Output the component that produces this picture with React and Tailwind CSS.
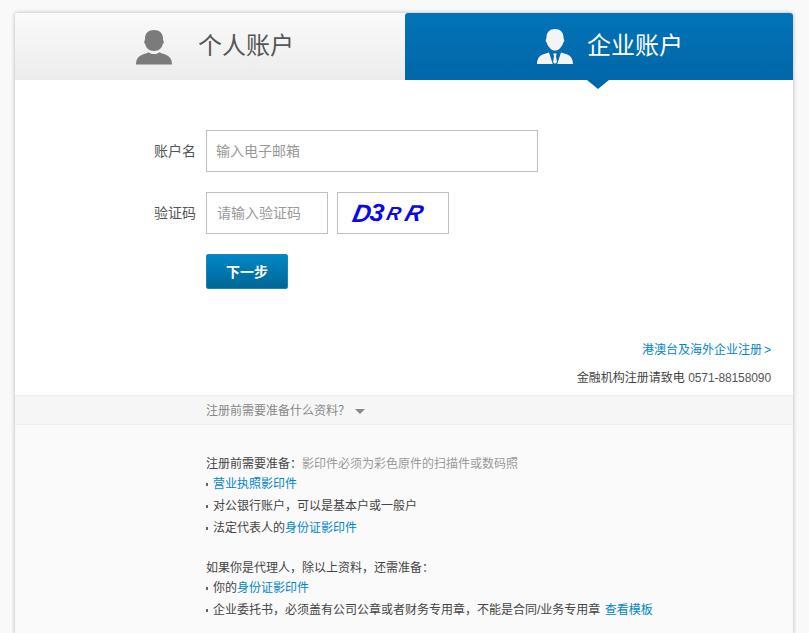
import React from 'react'

const cjk = 'font-["Liberation_Sans","Noto_Sans_CJK_SC",sans-serif]'

// silhouette for the personal tab
function PersonIcon() {
  return (
    <svg width="38" height="36" viewBox="0 0 38 36" fill="#7b7b7b">
      <path d="M19 1c5.500 0 9 3.200 9 8.500 0 1 .1 2 .6 2.700.5.700.1 2.200-.8 2.800-.7 3.700-3.600 7-8.800 7s-8.100-3.300-8.800-7c-.9-.6-1.300-2.100-.8-2.800.5-.7.6-1.700.6-2.700C10 4.200 13.500 1 19 1z" />
      <path d="M1 35.500c0-6 3-9 8-10.500 2-.6 3.500-1.200 4.500-1.800 1.500 1.300 3.500 1.800 5.500 1.800s4-.5 5.500-1.800c1 .6 2.500 1.200 4.500 1.800 5 1.500 8 4.500 8 10.500z" />
    </svg>
  )
}

// same bust in a suit and tie for the company tab
function SuitIcon() {
  return (
    <svg width="38" height="36" viewBox="0 0 38 36" fill="#f4f4f4">
      <path d="M19 0c5.200 0 8.500 3.200 8.500 8.200 0 1 .2 1.800.6 2.500.5.800.1 2.200-.8 2.800-.6 2.800-2.400 5-4.300 6.700-1 .9-2.500 1.400-4 1.400s-3-.5-4-1.400c-1.900-1.700-3.700-3.900-4.300-6.700-.9-.6-1.300-2-.8-2.800.4-.7.6-1.500.6-2.500C10.500 3.200 13.800 0 19 0z" />
      <path d="M13 23.500l3.800 11.500H1c0-5.500 2.500-8.500 6.500-9.800 2.200-.7 4-1.100 5.500-1.700z" />
      <path d="M25 23.500L21.200 35H37c0-5.500-2.500-8.500-6.500-9.800-2.200-.7-4-1.100-5.500-1.700z" />
      <path d="M17.200 24.500h3.600l-.8 2.500 1 6-2 2-2-2 1-6z" />
    </svg>
  )
}

function FieldLabel({ children }) {
  return <label className="w-[60px] pr-[10px] text-right text-sm text-[#555] shrink-0">{children}</label>
}

function Bullet({ children }) {
  return (
    <div className="h-[22px] leading-[22px] flex items-center">
      <span className="w-[2px] h-[3px] bg-[#666] mr-[5px] shrink-0" />
      <span>{children}</span>
    </div>
  )
}

export default function App() {
  const link = 'text-[#0086c9]'

  return (
    <div className={`h-[633px] overflow-hidden bg-[#f9f9f9] pt-[13px] px-[15px] text-[12px] text-[#444] ${cjk}`}>
      <div className="w-[778px] rounded-t-[3px] shadow-[0_0_4px_rgba(0,0,0,0.28)] bg-white">
        {/* Tabs */}
        <div className="flex h-[67px]">
          <div className="w-[390px] flex items-center bg-gradient-to-b from-[#fafafa] to-[#ececec] rounded-tl-[3px] pl-[120px]">
            <PersonIcon />
            <span className="ml-[25px] mb-[2px] text-[24px] text-[#555]">个人账户</span>
          </div>
          <div className="relative w-[388px] flex items-center bg-gradient-to-b from-[#0174b8] to-[#0167a8] rounded-t-[3px] pl-[131px]">
            <SuitIcon />
            <span className="ml-[13px] mb-[2px] text-[24px] text-white">企业账户</span>
            <span className="absolute left-[182px] top-[67px] w-0 h-0 border-x-[11px] border-x-transparent border-t-[9px] border-t-[#0167a8]" />
          </div>
        </div>

        {/* Form */}
        <div className="h-[315px] pt-[50px] pl-[131px]">
          <div className="flex items-center">
            <FieldLabel>账户名</FieldLabel>
            <input placeholder="输入电子邮箱" className="w-[332px] h-[42px] border border-[#bfbfbf] px-[9px] text-sm placeholder:text-[#999] outline-none" />
          </div>
          <div className="flex items-center mt-[20px]">
            <FieldLabel>验证码</FieldLabel>
            <input placeholder="请输入验证码" className="w-[122px] h-[42px] border border-[#bfbfbf] px-[10px] text-sm placeholder:text-[#999] outline-none" />
            <div className="w-[112px] h-[42px] ml-[9px] border border-[#bfbfbf] flex items-center pl-[15px] font-['Liberation_Sans',sans-serif] font-bold italic leading-none text-[#0a0ae6]">
              <span className="inline-block text-[25px] -skew-x-[12deg]">D</span>
              <span className="inline-block text-[25px] -ml-[1px] -translate-y-[1px] rotate-[8deg]">3</span>
              <span className="inline-block text-[19px] ml-[3px] -skew-x-[14deg]">R</span>
              <span className="inline-block text-[23px] ml-[5px] -skew-x-[18deg]">R</span>
            </div>
          </div>
          <button className="block ml-[60px] mt-[20px] w-[82px] h-[35px] rounded-[2px] border border-[#1d83b5] bg-gradient-to-b from-[#0088c6] to-[#006696] text-white text-sm font-bold">
            下一步
          </button>
          <div className="mt-[52px] pr-[22px] text-right">
            <a className={`text-[12px] ${link}`}>港澳台及海外企业注册<span className="ml-[2px]">&gt;</span></a>
          </div>
          <div className="mt-[10px] pr-[22px] text-right text-[12px] text-[#444]">
            金融机构注册请致电 <span className="tracking-[-0.1px] text-[#555]">0571-88158090</span>
          </div>
        </div>

        {/* Expander */}
        <div className="h-[30px] pt-[2px] flex items-center pl-[191px] bg-[#f6f6f6] border-y border-[#eeeeee] text-[#888]">
          注册前需要准备什么资料？
          <span className="ml-[5px] w-0 h-0 border-x-[5px] border-x-transparent border-t-[5px] border-t-[#888]" />
        </div>

        {/* Requirements */}
        <div className="h-[209px] bg-[#fafafa] pt-[29px] pl-[191px]">
          <div className="h-[19px] leading-[20px]">注册前需要准备：<span className="text-[#999]">影印件必须为彩色原件的扫描件或数码照</span></div>
          <Bullet><a className={link}>营业执照影印件</a></Bullet>
          <Bullet>对公银行账户，可以是基本户或一般户</Bullet>
          <Bullet>法定代表人的<a className={link}>身份证影印件</a></Bullet>
          <div className="h-[19px] leading-[20px] mt-[19px]">如果你是代理人，除以上资料，还需准备：</div>
          <Bullet>你的<a className={link}>身份证影印件</a></Bullet>
          <Bullet>企业委托书，必须盖有公司公章或者财务专用章，不能是合同/业务专用章 <a className={`ml-[1px] ${link}`}>查看模板</a></Bullet>
        </div>
      </div>
    </div>
  )
}
